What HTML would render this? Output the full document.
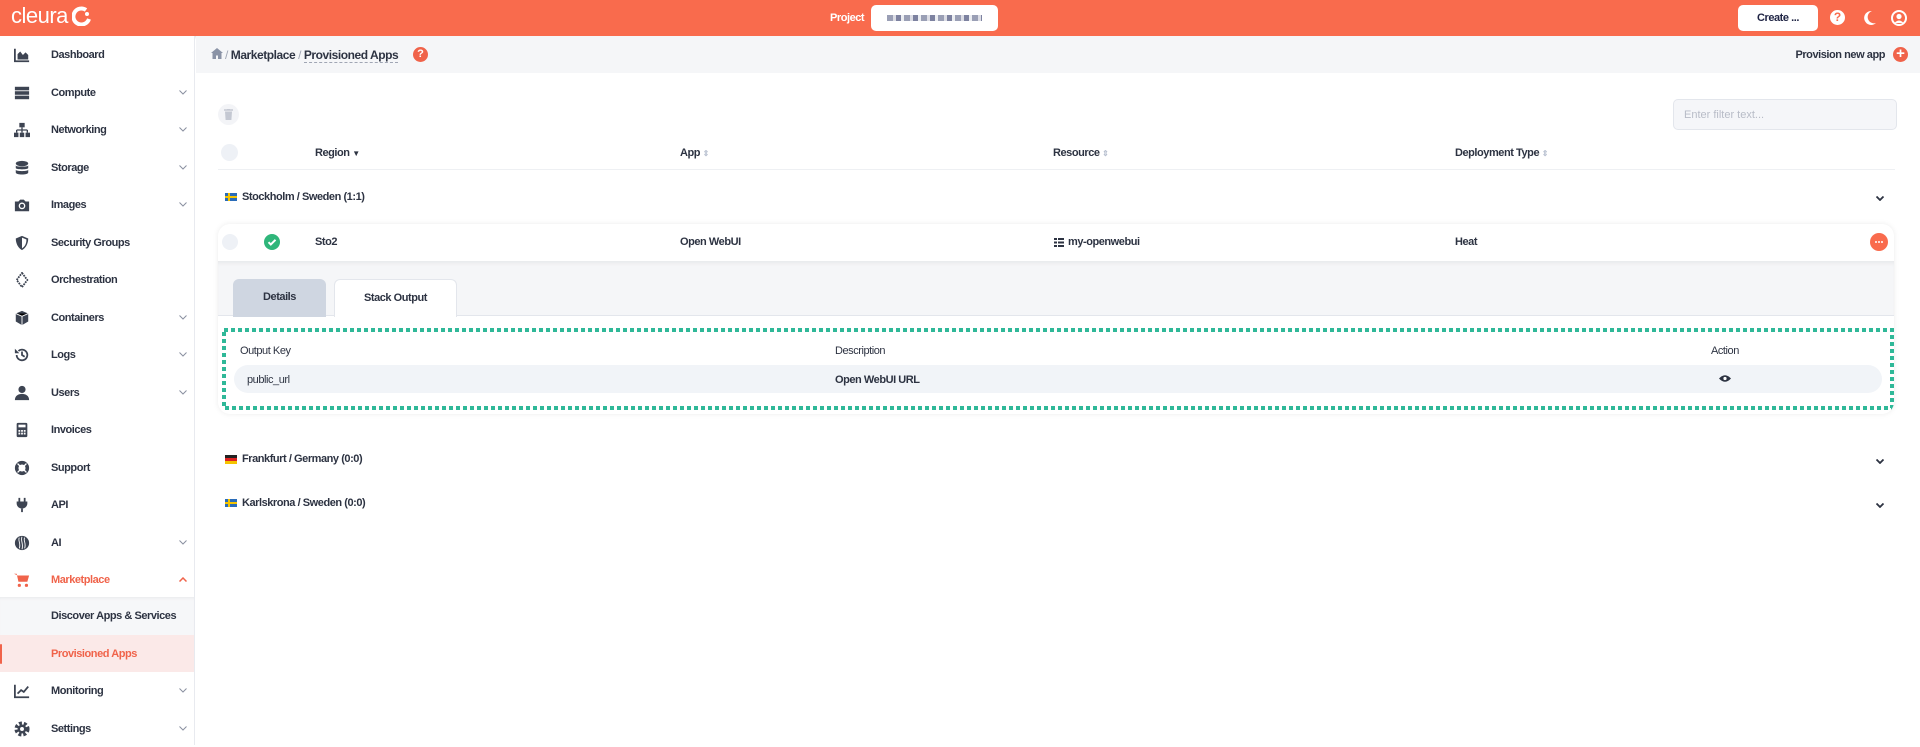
<!DOCTYPE html>
<html><head><meta charset="utf-8">
<style>
*{box-sizing:border-box;margin:0;padding:0}
body{width:1920px;height:745px;overflow:hidden;background:#fff;font-family:"Liberation Sans",Arial,sans-serif;font-size:11px;color:#2d3342;font-weight:bold;letter-spacing:-0.45px;position:relative}
.abs{position:absolute}
#top{left:0;top:0;width:1920px;height:36px;background:#f96b4d;box-shadow:0 1px 3px rgba(0,0,0,.15)}
#side{left:0;top:36px;width:195px;height:709px;border-right:1px solid #e8eaef;background:#fff}
.it{position:absolute;left:0;width:194px;height:37.5px}
.it .ic{position:absolute;left:14px;width:16px;height:16px;top:11px}
.it .tx{position:absolute;left:51px;top:13px}
.it .ch{position:absolute;left:179px;top:16px}
#crumb{left:196px;top:36px;width:1724px;height:37px;background:#f5f6f8}
.sub{color:#f0634a}
</style></head><body>
<div id="top" class="abs">
  <div class="abs" style="left:11px;top:3px;color:#fff;font-size:22px;font-weight:normal;letter-spacing:-0.5px">cleura</div>
  <svg class="abs" style="left:72px;top:6px" width="20" height="20" viewBox="0 0 20 20"><path d="M14 4 A8 8 0 1 0 17 13" stroke="#fff" stroke-width="4" fill="none"/><circle cx="15" cy="8" r="2" fill="#fff"/></svg>
  <div class="abs" style="left:830px;top:12px;color:#fff;font-size:11px">Project</div>
  <div class="abs" style="left:871px;top:5px;width:127px;height:26px;background:#fff;border-radius:5px">
    <div class="abs" style="left:16px;top:10px;width:95px;height:6px;background:repeating-linear-gradient(90deg,#9a9fb5 0 6px,#dcdde5 6px 9px,#7d82a0 9px 14px,#eceef2 14px 17px)"></div>
  </div>
  <div class="abs" style="left:1738px;top:5px;width:80px;height:26px;background:#fff;border-radius:5px;text-align:center;line-height:26px;color:#1f2444">Create ...</div>
  <div class="abs" style="left:1830px;top:10px;width:15px;height:15px;border-radius:50%;background:#fff;color:#f96b4d;font-size:12px;text-align:center;line-height:15px;letter-spacing:0">?</div>
  <svg class="abs" style="left:1862px;top:10px" width="15" height="16" viewBox="0 0 15 16"><path d="M10 1 A7 7 0 1 0 14 13 A6 6 0 0 1 10 1Z" fill="#fff"/></svg>
  <svg class="abs" style="left:1891px;top:10px" width="16" height="16" viewBox="0 0 16 16"><circle cx="8" cy="8" r="7" fill="none" stroke="#fff" stroke-width="2"/><circle cx="8" cy="6.5" r="2.6" fill="#fff"/><path d="M3.5 13 Q8 8 12.5 13" fill="#fff"/></svg>
</div>

<svg width="0" height="0" style="position:absolute"><defs><symbol id="chev" viewBox="0 0 8 5"><path d="M0.5 0.5L4 4 7.5 0.5" stroke="#8a90a0" stroke-width="1" fill="none"/></symbol><symbol id="chevd" viewBox="0 0 8 5"><path d="M0.5 0.5L4 4 7.5 0.5" stroke="#2d3342" stroke-width="1.8" fill="none"/></symbol></defs></svg>

<div id="side" class="abs">
  <div class="it" style="top:0"><svg class="ic" viewBox="0 0 18 18"><path d="M1 2v14h16" stroke="#3d4452" stroke-width="2" fill="none"/><path d="M4 14V8l3-3 3 4 3-3 3 3v5z" fill="#3d4452"/></svg><span class="tx">Dashboard</span></div>
  <div class="it" style="top:37.5px"><svg class="ic" viewBox="0 0 18 18"><rect x="1" y="2" width="16" height="4" fill="#3d4452"/><rect x="1" y="7" width="16" height="4" fill="#3d4452"/><rect x="1" y="12" width="16" height="4" fill="#3d4452"/></svg><span class="tx">Compute</span><svg class="ch" width="8" height="5"><use href="#chev"/></svg></div>
  <div class="it" style="top:75px"><svg class="ic" viewBox="0 0 18 18"><rect x="6" y="1" width="6" height="5" fill="#3d4452"/><path d="M9 6v3M3 9h12M3 9v3M9 9v3M15 9v3" stroke="#3d4452" stroke-width="1.5"/><rect x="0" y="12" width="5" height="5" fill="#3d4452"/><rect x="6.5" y="12" width="5" height="5" fill="#3d4452"/><rect x="13" y="12" width="5" height="5" fill="#3d4452"/></svg><span class="tx">Networking</span><svg class="ch" width="8" height="5"><use href="#chev"/></svg></div>
  <div class="it" style="top:112.5px"><svg class="ic" viewBox="0 0 18 18"><ellipse cx="9" cy="4" rx="7" ry="3" fill="#3d4452"/><path d="M2 6v3c0 2 14 2 14 0V6c0 2-14 2-14 0zM2 11v3c0 3 14 3 14 0v-3c0 2-14 2-14 0z" fill="#3d4452"/></svg><span class="tx">Storage</span><svg class="ch" width="8" height="5"><use href="#chev"/></svg></div>
  <div class="it" style="top:150px"><svg class="ic" viewBox="0 0 18 18"><path d="M1 5h4l2-2h4l2 2h4v11H1z" fill="#3d4452"/><circle cx="9" cy="10" r="3" fill="none" stroke="#fff" stroke-width="1.5"/></svg><span class="tx">Images</span><svg class="ch" width="8" height="5"><use href="#chev"/></svg></div>
  <div class="it" style="top:187.5px"><svg class="ic" viewBox="0 0 18 18"><path d="M9 1l7 3c0 6-3 11-7 13C5 15 2 10 2 4z" fill="#3d4452"/><path d="M9 3v12c3-2 5-5 5-10z" fill="#fff"/></svg><span class="tx">Security Groups</span></div>
  <div class="it" style="top:225px"><svg class="ic" viewBox="0 0 18 18"><path d="M9 1l6 8-6 8-6-8z" fill="none" stroke="#3d4452" stroke-width="2" stroke-dasharray="2 1"/></svg><span class="tx">Orchestration</span></div>
  <div class="it" style="top:262.5px"><svg class="ic" viewBox="0 0 18 18"><path d="M9 1l7 3v9l-7 4-7-4V4z" fill="#3d4452"/><path d="M2 4l7 3 7-3M9 7v10" stroke="#fff" stroke-width="1"/></svg><span class="tx">Containers</span><svg class="ch" width="8" height="5"><use href="#chev"/></svg></div>
  <div class="it" style="top:300px"><svg class="ic" viewBox="0 0 18 18"><path d="M3 9a6 6 0 1 0 2-4.5" stroke="#3d4452" stroke-width="2" fill="none"/><path d="M1 2v5h5z" fill="#3d4452"/><path d="M9 5v4l3 2" stroke="#3d4452" stroke-width="2" fill="none"/></svg><span class="tx">Logs</span><svg class="ch" width="8" height="5"><use href="#chev"/></svg></div>
  <div class="it" style="top:337.5px"><svg class="ic" viewBox="0 0 18 18"><circle cx="9" cy="5" r="4" fill="#3d4452"/><path d="M1 17c0-5 4-7 8-7s8 2 8 7z" fill="#3d4452"/></svg><span class="tx">Users</span><svg class="ch" width="8" height="5"><use href="#chev"/></svg></div>
  <div class="it" style="top:375px"><svg class="ic" viewBox="0 0 18 18"><rect x="3" y="1" width="12" height="16" rx="1.5" fill="#3d4452"/><rect x="5" y="3" width="8" height="3" fill="#fff"/><path d="M5 9h2v2H5zM8 9h2v2H8zM11 9h2v2h-2zM5 12h2v2H5zM8 12h2v2H8zM11 12h2v2h-2z" fill="#fff"/></svg><span class="tx">Invoices</span></div>
  <div class="it" style="top:412.5px"><svg class="ic" viewBox="0 0 18 18"><circle cx="9" cy="9" r="6" fill="none" stroke="#3d4452" stroke-width="4"/><path d="M4 4l3 3M14 4l-3 3M4 14l3-3M14 14l-3-3" stroke="#fff" stroke-width="1.5"/></svg><span class="tx">Support</span></div>
  <div class="it" style="top:450px"><svg class="ic" viewBox="0 0 18 18"><path d="M6 1v4M12 1v4" stroke="#3d4452" stroke-width="2"/><path d="M3 5h12v3a6 6 0 0 1-6 5 6 6 0 0 1-6-5z" fill="#3d4452"/><path d="M9 13v4" stroke="#3d4452" stroke-width="2"/></svg><span class="tx">API</span></div>
  <div class="it" style="top:487.5px"><svg class="ic" viewBox="0 0 18 18"><circle cx="9" cy="9" r="8" fill="#3d4452"/><path d="M6 3c-2 3 2 6 0 12M9 2c-2 4 2 8 0 14M12 3c-2 3 2 6 0 12" stroke="#fff" stroke-width="1" fill="none"/></svg><span class="tx">AI</span><svg class="ch" width="8" height="5"><use href="#chev"/></svg></div>
  <div class="it" style="top:525px"><svg class="ic" viewBox="0 0 18 18"><path d="M0 2h3l2 9h10l2-7H4z" fill="#f0634a"/><circle cx="6" cy="15" r="1.8" fill="#f0634a"/><circle cx="14" cy="15" r="1.8" fill="#f0634a"/></svg><span class="tx sub">Marketplace</span><svg class="ch" width="8" height="5" viewBox="0 0 8 5"><path d="M0.5 4.5L4 1 7.5 4.5" stroke="#f0634a" stroke-width="1.5" fill="none"/></svg></div>
  <div class="it" style="top:561px;background:#f6f7f9;box-shadow:inset 0 3px 3px -2px rgba(0,0,0,.06)"><span class="tx">Discover Apps &amp; Services</span></div>
  <div class="it" style="top:598.5px;background:#fbe9e8"><div class="abs" style="left:0;top:9px;width:2px;height:20px;background:#f0634a;border-radius:1px"></div><span class="tx sub">Provisioned Apps</span></div>
  <div class="it" style="top:636px"><svg class="ic" viewBox="0 0 18 18"><path d="M1 2v14h16" stroke="#3d4452" stroke-width="2" fill="none"/><path d="M4 12l4-4 3 2 5-6" stroke="#3d4452" stroke-width="2" fill="none"/></svg><span class="tx">Monitoring</span><svg class="ch" width="8" height="5"><use href="#chev"/></svg></div>
  <div class="it" style="top:673.5px"><svg class="ic" viewBox="0 0 18 18"><circle cx="9" cy="9" r="6" fill="none" stroke="#3d4452" stroke-width="5" stroke-dasharray="3 2"/><circle cx="9" cy="9" r="5" fill="#3d4452"/><circle cx="9" cy="9" r="2.2" fill="#fff"/></svg><span class="tx">Settings</span><svg class="ch" width="8" height="5"><use href="#chev"/></svg></div>
</div>

<div id="crumb" class="abs">
  <svg class="abs" style="left:15px;top:12px" width="12" height="11" viewBox="0 0 12 11"><path d="M6 0L0 5h1.5v6h3.5V7.5h2V11h3.5V5H12z" fill="#8a93a6"/></svg>
  <div class="abs" style="left:29px;top:12px;font-size:12px"><span style="color:#a0a6b4;font-weight:normal">/ </span>Marketplace <span style="color:#a0a6b4;font-weight:normal">/</span> <span style="border-bottom:1px dashed #a0a6b4">Provisioned Apps</span></div>
  <div class="abs" style="left:217px;top:11px;width:15px;height:15px;border-radius:50%;background:#f0634a;color:#fff;text-align:center;line-height:15px;font-size:11px;letter-spacing:0">?</div>
  <div class="abs" style="right:35px;top:13px;font-size:11px">Provision new app</div>
  <div class="abs" style="left:1697px;top:11px;width:15px;height:15px;border-radius:50%;background:#f0634a;color:#fff;text-align:center;line-height:14px;font-size:15px;letter-spacing:0">+</div>
</div>

<div class="abs" style="left:218px;top:104px;width:21px;height:21px;border-radius:50%;background:#f3f4f7"></div>
<svg class="abs" style="left:224px;top:109px" width="9" height="11" viewBox="0 0 9 11"><path d="M0 1h9M3 0h3" stroke="#c4c8d2" stroke-width="1.5"/><path d="M1 2.5h7l-.6 8.5H1.6z" fill="#c4c8d2"/></svg>
<div class="abs" style="left:1673px;top:99px;width:224px;height:31px;background:#f5f6f9;border:1px solid #e3e6ec;border-radius:5px;color:#b8bcc7;font-weight:normal;padding:9px 10px;letter-spacing:0">Enter filter text...</div>

<div class="abs" style="left:221px;top:144px;width:17px;height:17px;border-radius:50%;background:#eef1f6"></div>
<div class="abs" style="left:315px;top:147px">Region <span style="font-size:8px">&#9660;</span></div>
<div class="abs" style="left:680px;top:147px">App <span style="color:#b8c0d0;font-size:8px">&#8661;</span></div>
<div class="abs" style="left:1053px;top:147px">Resource <span style="color:#b8c0d0;font-size:8px">&#8661;</span></div>
<div class="abs" style="left:1455px;top:147px">Deployment Type <span style="color:#b8c0d0;font-size:8px">&#8661;</span></div>
<div class="abs" style="left:218px;top:169px;width:1677px;height:1px;background:#eef0f3"></div>

<div class="abs" style="left:225px;top:193px;width:12px;height:8px;background:#2a6cb8"><div class="abs" style="left:3px;top:0;width:2px;height:8px;background:#f5c400"></div><div class="abs" style="left:0;top:3px;width:12px;height:2px;background:#f5c400"></div></div>
<div class="abs" style="left:242px;top:191px">Stockholm / Sweden (1:1)</div>
<svg class="abs" style="left:1876px;top:196px" width="8" height="5"><use href="#chevd"/></svg>

<div class="abs" style="left:218px;top:224px;width:1676px;height:190px;border-radius:12px;background:#fff;box-shadow:0 0 6px rgba(0,0,0,.08);overflow:hidden">
  <div class="abs" style="left:0;top:37px;width:1676px;height:55px;background:#f5f6f8;border-bottom:1px solid #e3e6ec;box-shadow:inset 0 4px 4px -2px rgba(0,0,0,.06)"></div>
  <div class="abs" style="left:4px;top:10px;width:16px;height:16px;border-radius:50%;background:#eef1f6"></div>
  <svg class="abs" style="left:46px;top:10px" width="16" height="16" viewBox="0 0 16 16"><circle cx="8" cy="8" r="8" fill="#2fb67a"/><path d="M4.5 8.2l2.3 2.3 4.7-4.7" stroke="#fff" stroke-width="2" fill="none"/></svg>
  <div class="abs" style="left:97px;top:12px">Sto2</div>
  <div class="abs" style="left:462px;top:12px">Open WebUI</div>
  <svg class="abs" style="left:836px;top:14px" width="10" height="9" viewBox="0 0 10 9"><path d="M0 0h3v2H0zM4 0h6v2H4zM0 3.5h3v2H0zM4 3.5h6v2H4zM0 7h3v2H0zM4 7h6v2H4z" fill="#2d3342"/></svg>
  <div class="abs" style="left:850px;top:12px">my-openwebui</div>
  <div class="abs" style="left:1237px;top:12px">Heat</div>
  <div class="abs" style="left:1652px;top:9px;width:18px;height:18px;border-radius:50%;background:#f96b4d"><div class="abs" style="left:5px;top:8px;width:2px;height:2px;background:#fff;border-radius:1px"></div><div class="abs" style="left:8px;top:8px;width:2px;height:2px;background:#fff;border-radius:1px"></div><div class="abs" style="left:11px;top:8px;width:2px;height:2px;background:#fff;border-radius:1px"></div></div>
  <div class="abs" style="left:15px;top:55px;width:93px;height:38px;background:#cfd6e1;border-radius:6px 6px 0 0;text-align:center;line-height:36px">Details</div>
  <div class="abs" style="left:116px;top:55px;width:123px;height:38px;background:#fff;border:1px solid #e3e6ec;border-bottom:none;border-radius:6px 6px 0 0;text-align:center;line-height:36px">Stack Output</div>
  <svg class="abs" style="left:4px;top:104px" width="1672" height="82"><rect x="2" y="2" width="1668" height="78" fill="none" stroke="#2fb898" stroke-width="4" stroke-dasharray="4 3"/></svg>
  <div class="abs" style="left:22px;top:121px;font-weight:normal">Output Key</div>
  <div class="abs" style="left:617px;top:121px;font-weight:normal">Description</div>
  <div class="abs" style="left:1493px;top:121px;font-weight:normal">Action</div>
  <div class="abs" style="left:16px;top:141px;width:1648px;height:28px;background:#f1f4f8;border-radius:14px"></div>
  <div class="abs" style="left:29px;top:150px;font-weight:normal">public_url</div>
  <div class="abs" style="left:617px;top:150px">Open WebUI URL</div>
  <svg class="abs" style="left:1501px;top:150px" width="12" height="9" viewBox="0 0 12 9"><path d="M0 4.5Q6 -2 12 4.5Q6 11 0 4.5z" fill="#2d3342"/><circle cx="6" cy="4.5" r="1.6" fill="#fff"/></svg>
</div>

<div class="abs" style="left:225px;top:455px;width:12px;height:9px"><div style="height:3px;background:#222"></div><div style="height:3px;background:#d22"></div><div style="height:3px;background:#f5c400"></div></div>
<div class="abs" style="left:242px;top:453px">Frankfurt / Germany (0:0)</div>
<svg class="abs" style="left:1876px;top:459px" width="8" height="5"><use href="#chevd"/></svg>
<div class="abs" style="left:225px;top:499px;width:12px;height:8px;background:#2a6cb8"><div class="abs" style="left:3px;top:0;width:2px;height:8px;background:#f5c400"></div><div class="abs" style="left:0;top:3px;width:12px;height:2px;background:#f5c400"></div></div>
<div class="abs" style="left:242px;top:497px">Karlskrona / Sweden (0:0)</div>
<svg class="abs" style="left:1876px;top:503px" width="8" height="5"><use href="#chevd"/></svg>
</body></html>
